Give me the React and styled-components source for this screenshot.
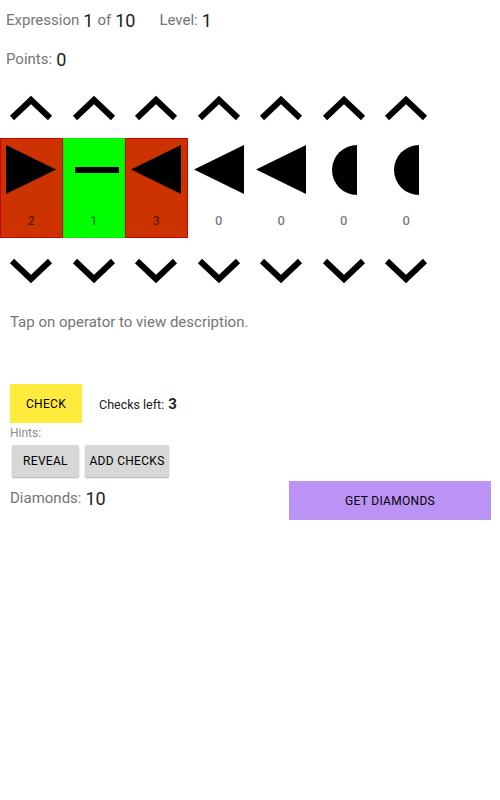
import React from "react";
import styled, { createGlobalStyle } from "styled-components";

const Global = createGlobalStyle`
  html, body { margin: 0; padding: 0; background: #fff; }
  body { font-family: Roboto, "Noto Sans", sans-serif; }
`;

const Page = styled.div`
  width: 500px;
  min-height: 800px;
  background: #fff;
`;

const Header = styled.div`
  padding: 8px 0 0 6px;
`;

const InfoLine = styled.div`
  display: flex;
  align-items: center;
  height: 24px;
  margin-top: ${(p) => p.$mt || 0}px;
  font-size: 15px;
  color: #757575;
`;

const Big = styled.span`
  font-size: 18px;
  color: #212121;
  margin: 0 4px 0 4px;
`;

const Spacer = styled.span`
  display: inline-block;
  width: ${(p) => p.$w}px;
`;

const Grid = styled.div`
  display: flex;
  margin-top: 24px;
`;

const Column = styled.div`
  width: 62.5px;
  display: flex;
  flex-direction: column;
  align-items: center;
`;

const Chevron = styled.svg`
  display: block;
  width: 44px;
  height: 26px;
`;

const Cell = styled.div`
  box-sizing: border-box;
  width: 62.5px;
  height: 100px;
  margin: 17px 0 20px;
  background: ${(p) => p.$bg || "transparent"};
  border: 1px solid ${(p) => p.$border || "transparent"};
  display: flex;
  flex-direction: column;
  align-items: center;
  padding-top: 6px;
`;

const Glyph = styled.svg`
  display: block;
  width: 50px;
  height: 50px;
`;

const Count = styled.div`
  margin-top: 18px;
  font-size: 13px;
  font-weight: 500;
  color: rgba(0, 0, 0, 0.54);
`;

const Description = styled.div`
  margin: 28px 0 0 10px;
  font-size: 15px;
  line-height: 20px;
  color: #757575;
`;

const CheckRow = styled.div`
  display: flex;
  align-items: center;
  margin: 52px 0 0 10px;
`;

const Button = styled.button`
  box-sizing: border-box;
  border: none;
  border-radius: ${(p) => (p.$flat ? 0 : 2)}px;
  padding: 0;
  width: ${(p) => p.$w}px;
  height: ${(p) => p.$h}px;
  background: ${(p) => p.$bg};
  box-shadow: ${(p) =>
    p.$raised ? "0 1px 2px rgba(0,0,0,0.22), 0 1px 1px rgba(0,0,0,0.12)" : "none"};
  font-family: Roboto, sans-serif;
  font-size: 12px;
  font-weight: 400;
  color: #000;
  text-transform: uppercase;
  letter-spacing: 0.3px;
`;

const ChecksLeft = styled.div`
  margin-left: 17px;
  font-size: 12.5px;
  color: #212121;
  b {
    font-size: 15px;
    font-weight: 700;
    margin-left: 4px;
  }
`;

const Hints = styled.div`
  margin: 3px 0 0 10px;
  font-size: 12px;
  line-height: 14px;
  color: #8a8a8a;
`;

const HintButtons = styled.div`
  display: flex;
  gap: 6px;
  margin: 5px 0 0 12px;
`;

const DiamondRow = styled.div`
  display: flex;
  justify-content: space-between;
  align-items: flex-start;
  margin: 4px 9px 0 10px;
`;

const DiamondText = styled.div`
  display: flex;
  align-items: center;
  height: 26px;
  margin-top: 4px;
  font-size: 15px;
  color: #757575;
`;

const Up = () => (
  <Chevron viewBox="0 0 44 26">
    <polyline points="3,23 22,5 41,23" fill="none" stroke="#000" strokeWidth="6" />
  </Chevron>
);

const Down = () => (
  <Chevron viewBox="0 0 44 26">
    <polyline points="3,3 22,21 41,3" fill="none" stroke="#000" strokeWidth="6" />
  </Chevron>
);

const shapes = {
  right: <polygon points="0,0 50,24.5 0,49" fill="#000" />,
  left: <polygon points="50,0 0,24.5 50,49" fill="#000" />,
  minus: <rect x="6" y="22" width="49" height="6" fill="#000" />,
  half: <path d="M38,0 A25,25 0 0 0 38,50 Z" fill="#000" />,
};

const ops = [
  { shape: "right", n: 2, bg: "#cc3300", border: "#cc0000" },
  { shape: "minus", n: 1, bg: "#00ff00", border: "#00ee00" },
  { shape: "left", n: 3, bg: "#cc3300", border: "#cc0000" },
  { shape: "left", n: 0 },
  { shape: "left", n: 0 },
  { shape: "half", n: 0 },
  { shape: "half", n: 0 },
];

export default function App() {
  return (
    <Page>
      <Global />
      <Header>
        <InfoLine>
          Expression<Big>1</Big>of<Big>10</Big>
          <Spacer $w={20} />
          Level:<Big>1</Big>
        </InfoLine>
        <InfoLine $mt={15}>
          Points:<Big>0</Big>
        </InfoLine>
      </Header>
      <Grid>
        {ops.map((o, i) => (
          <Column key={i}>
            <Up />
            <Cell $bg={o.bg} $border={o.border}>
              <Glyph viewBox="0 0 50 50">{shapes[o.shape]}</Glyph>
              <Count>{o.n}</Count>
            </Cell>
            <Down />
          </Column>
        ))}
      </Grid>
      <Description>Tap on operator to view description.</Description>
      <CheckRow>
        <Button $w={72} $h={39} $bg="#ffeb3b" $flat>
          Check
        </Button>
        <ChecksLeft>
          Checks left:<b>3</b>
        </ChecksLeft>
      </CheckRow>
      <Hints>Hints:</Hints>
      <HintButtons>
        <Button $w={67} $h={32} $bg="#d6d7d7" $raised>
          Reveal
        </Button>
        <Button $w={84} $h={32} $bg="#d6d7d7" $raised>
          Add checks
        </Button>
      </HintButtons>
      <DiamondRow>
        <DiamondText>
          Diamonds:<Big>10</Big>
        </DiamondText>
        <Button $w={202} $h={39} $bg="#bb93f5" $flat>
          Get diamonds
        </Button>
      </DiamondRow>
    </Page>
  );
}
